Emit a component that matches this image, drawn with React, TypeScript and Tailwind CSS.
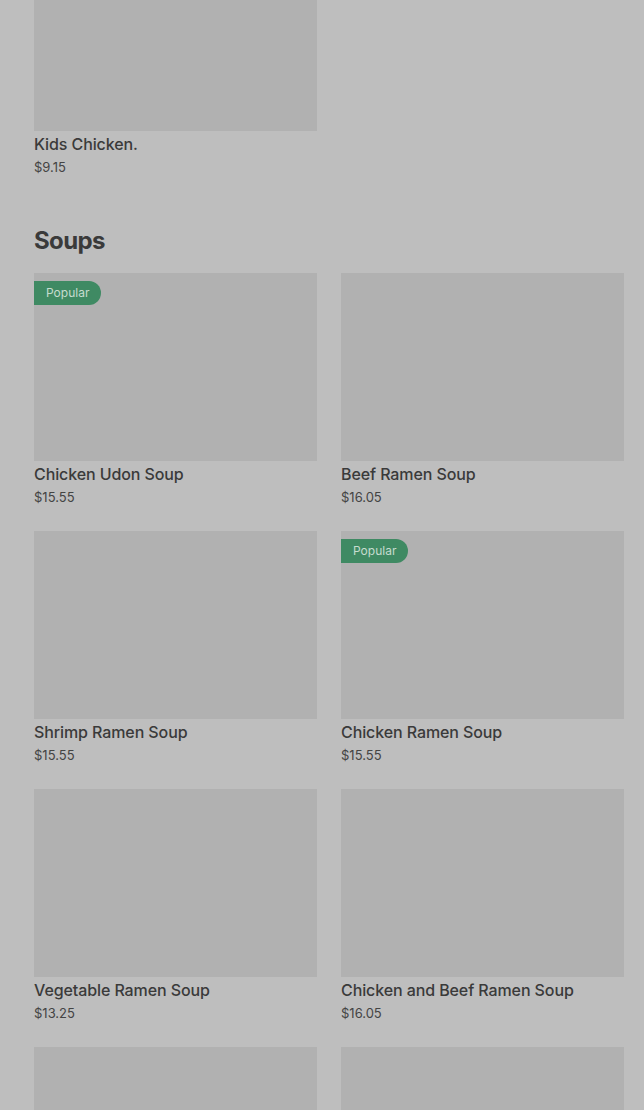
const soups = [
  { name: "Chicken Udon Soup", price: "$15.55", popular: true },
  { name: "Beef Ramen Soup", price: "$16.05", popular: false },
  { name: "Shrimp Ramen Soup", price: "$15.55", popular: false },
  { name: "Chicken Ramen Soup", price: "$15.55", popular: true },
  { name: "Vegetable Ramen Soup", price: "$13.25", popular: false },
  { name: "Chicken and Beef Ramen Soup", price: "$16.05", popular: false },
  { name: "", price: "", popular: false },
  { name: "", price: "", popular: false },
];

function Item({ name, price, popular, imgTop }: { name: string; price: string; popular: boolean; imgTop?: boolean }) {
  return (
    <div className="flex flex-col">
      <div className={`relative ${imgTop ? "h-[131px]" : "h-[188px]"} bg-[#b1b1b1]`}>
        {popular && (
          <span className="absolute left-0 top-2 h-6 pl-3 pr-3 flex items-center rounded-r-full bg-[#3f8a63] text-[12px] text-[#c6dccf]">
            Popular
          </span>
        )}
      </div>
      {name && (
        <div className="h-[70px] pt-[3px]">
          <div className="text-[16px] leading-[20px] font-medium text-[#3a3a3a] tracking-[-0.1px]">{name}</div>
          <div className="mt-[3px] text-[13px] leading-[20px] text-[#444]">{price}</div>
        </div>
      )}
    </div>
  );
}

export default function App() {
  return (
    <div className="w-[644px] h-[1110px] overflow-hidden bg-[#bebebe] pl-[34px] pr-[20px]" style={{ fontFamily: "Inter, 'Liberation Sans', sans-serif" }}>
      <div className="grid grid-cols-2 gap-x-6">
        <Item name="Kids Chicken." price="$9.15" popular={false} imgTop />
      </div>

      <h2 className="mt-[24px] text-[24px] leading-[32px] font-bold text-[#3a3a3a] tracking-[-0.6px]">Soups</h2>

      <div className="mt-[16px] grid grid-cols-2 gap-x-6">
        {soups.map((s, i) => (
          <Item key={i} {...s} />
        ))}
      </div>
    </div>
  );
}
